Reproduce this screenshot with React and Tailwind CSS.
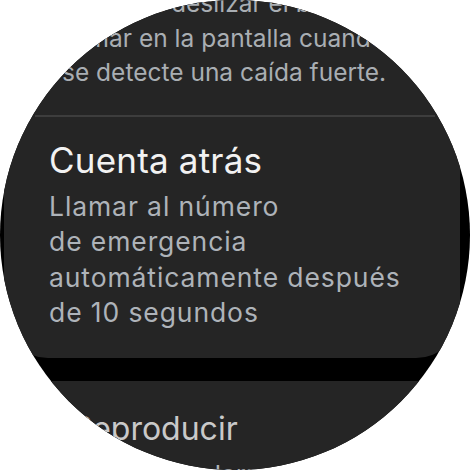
// Watch screen: fall detection settings list, clipped to the round display.
const font = { fontFamily: 'Inter, "Noto Sans", sans-serif' }

export default function App() {
  return (
    <div className="h-[470px] w-[470px] bg-white" style={font}>
      <div className="h-full w-full overflow-hidden rounded-full bg-black">
        <div className="-mt-[14px] flex flex-col">
          {/* first card: tail of previous description + countdown item */}
          <div className="ml-[4px] mr-[10px] rounded-b-[44px] bg-[#252525] pb-[27px]">
            <div className="whitespace-nowrap pl-[58px] text-[24.5px] leading-[34.5px] text-[#a9aeb3]">
              <div>te pedirá deslizar el botón de</div>
              <div>llamar en la pantalla cuando</div>
              <div>se detecte una caída fuerte.</div>
            </div>
            <div className="ml-[31px] mr-[25px] mt-[25px] h-[2px] bg-[#3d3d3d]" />
            <div className="pl-[45px] pt-[22px]">
              <div className="text-[35px] leading-[42px] tracking-[0.2px] text-[#f2f2f2]">Cuenta atrás</div>
              <div className="mt-[8px] text-[26.5px] leading-[35.5px] tracking-[0.9px] text-[#aeb3b9]">
                <div>Llamar al número</div>
                <div>de emergencia</div>
                <div>automáticamente después</div>
                <div>de 10 segundos</div>
              </div>
            </div>
          </div>

          {/* next card, mostly below the screen edge */}
          <div className="ml-[4px] mr-[10px] mt-[23px] h-[130px] rounded-t-[44px] bg-[#252525] pl-[68px] pt-[30px]">
            <div className="whitespace-nowrap text-[32px] leading-[36px] text-[#c9c9c9]">Reproducir</div>
            <div className="mt-[12px] whitespace-nowrap text-[26px] leading-[32px] text-[#aeb3b9]">sonido de alarma</div>
          </div>
        </div>
      </div>
    </div>
  )
}
